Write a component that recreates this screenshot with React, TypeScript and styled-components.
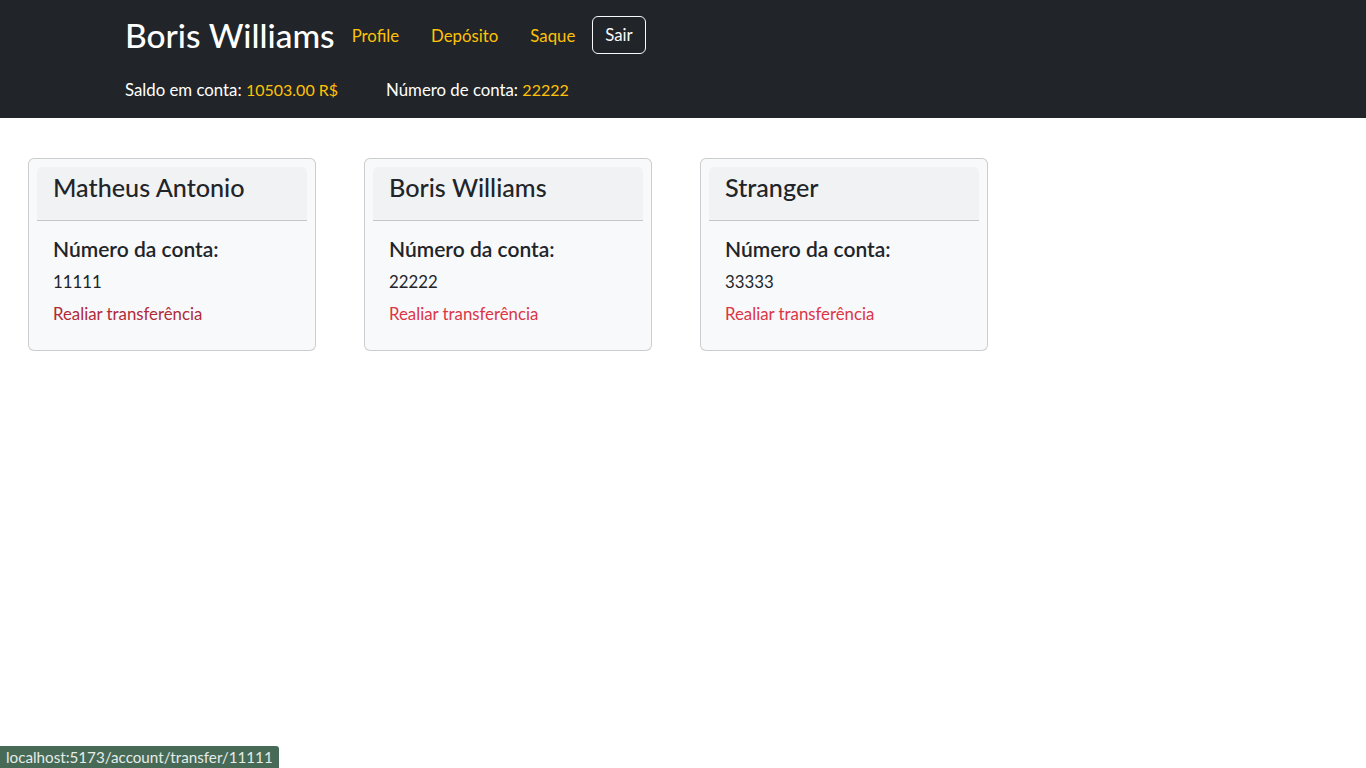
import React from "react";
import styled, { createGlobalStyle } from "styled-components";

const Global = createGlobalStyle`
  html, body { margin: 0; padding: 0; background: #fff; }
  body {
    font-family: Lato, "Open Sans", "Noto Sans", sans-serif;
    font-size: 16.8px;
    line-height: 24px;
    color: #212529;
  }
  * { box-sizing: border-box; }
`;

const Navbar = styled.header`
  background: #212529;
  padding: 16px 0;
`;

const Container = styled.div`
  width: 1140px;
  margin: 0 auto;
  padding: 0 12px;
  display: flex;
  flex-direction: column;
  gap: 24px;
`;

const TopRow = styled.div`
  display: flex;
  align-items: center;
  height: 38px;
`;

const Brand = styled.span`
  font-size: 33.5px;
  font-weight: 500;
  line-height: 38px;
  color: #fff;
  margin-right: 17px;
`;

const NavLinks = styled.nav`
  display: flex;
  align-items: center;
  gap: 32px;
  padding-top: 2px;
`;

const NavLink = styled.a`
  color: #ffc107;
  text-decoration: none;
`;

const OutlineButton = styled.button`
  margin-left: 17px;
  background: transparent;
  color: #f8f9fa;
  border: 1px solid #f8f9fa;
  border-radius: 6px;
  padding: 6px 12px;
  font: inherit;
  line-height: 24px;
  cursor: pointer;
`;

const InfoRow = styled.div`
  display: flex;
  gap: 48px;
  color: #fff;
  line-height: 24px;
`;

const Accent = styled.span`
  color: #ffc107;
  font-size: 16px;
`;

const Cards = styled.main`
  display: flex;
  gap: 48px;
  padding: 40px 28px;
`;

const Card = styled.section`
  width: 288px;
  background: #f8f9fa;
  border: 1px solid rgba(0, 0, 0, 0.175);
  border-radius: 6px;
  padding: 8px;
`;

const CardHeader = styled.div`
  background: rgba(33, 37, 41, 0.03);
  border-bottom: 1px solid rgba(0, 0, 0, 0.175);
  border-radius: 5px 5px 0 0;
  padding: 6px 16px 10px;
`;

const CardTitle = styled.h4`
  margin: 0 0 8px;
  font-size: 25.2px;
  font-weight: 500;
  line-height: 28.8px;
`;

const CardBody = styled.div`
  padding: 16px 16px 16px;
`;

const Label = styled.h5`
  margin: 0 0 9px;
  font-size: 21px;
  font-weight: 600;
  line-height: 24px;
`;

const AccountNumber = styled.p`
  margin: 0 0 8px;
`;

const TransferLink = styled.a<{ $hover?: boolean }>`
  display: block;
  color: ${(p) => (p.$hover ? "#b02a37" : "#dc3545")};
  text-decoration: none;
`;

const StatusBar = styled.div`
  position: fixed;
  left: 0;
  bottom: 0;
  height: 22px;
  padding: 0 6px;
  background: #476a57;
  color: #e6ece8;
  font-size: 15.2px;
  line-height: 22px;
  border-top-right-radius: 3px;
`;

const accounts = [
  { name: "Matheus Antonio", number: "11111", hover: true },
  { name: "Boris Williams", number: "22222" },
  { name: "Stranger", number: "33333" },
];

export default function App() {
  return (
    <>
      <Global />
      <Navbar>
        <Container>
          <TopRow>
            <Brand>Boris Williams</Brand>
            <NavLinks>
              <NavLink href="#">Profile</NavLink>
              <NavLink href="#">Depósito</NavLink>
              <NavLink href="#">Saque</NavLink>
            </NavLinks>
            <OutlineButton>Sair</OutlineButton>
          </TopRow>
          <InfoRow>
            <span>
              Saldo em conta: <Accent>10503.00 R$</Accent>
            </span>
            <span>
              Número de conta: <Accent>22222</Accent>
            </span>
          </InfoRow>
        </Container>
      </Navbar>
      <Cards>
        {accounts.map((a) => (
          <Card key={a.number}>
            <CardHeader>
              <CardTitle>{a.name}</CardTitle>
            </CardHeader>
            <CardBody>
              <Label>Número da conta:</Label>
              <AccountNumber>{a.number}</AccountNumber>
              <TransferLink href="#" $hover={a.hover}>
                Realiar transferência
              </TransferLink>
            </CardBody>
          </Card>
        ))}
      </Cards>
      <StatusBar>localhost:5173/account/transfer/11111</StatusBar>
    </>
  );
}
